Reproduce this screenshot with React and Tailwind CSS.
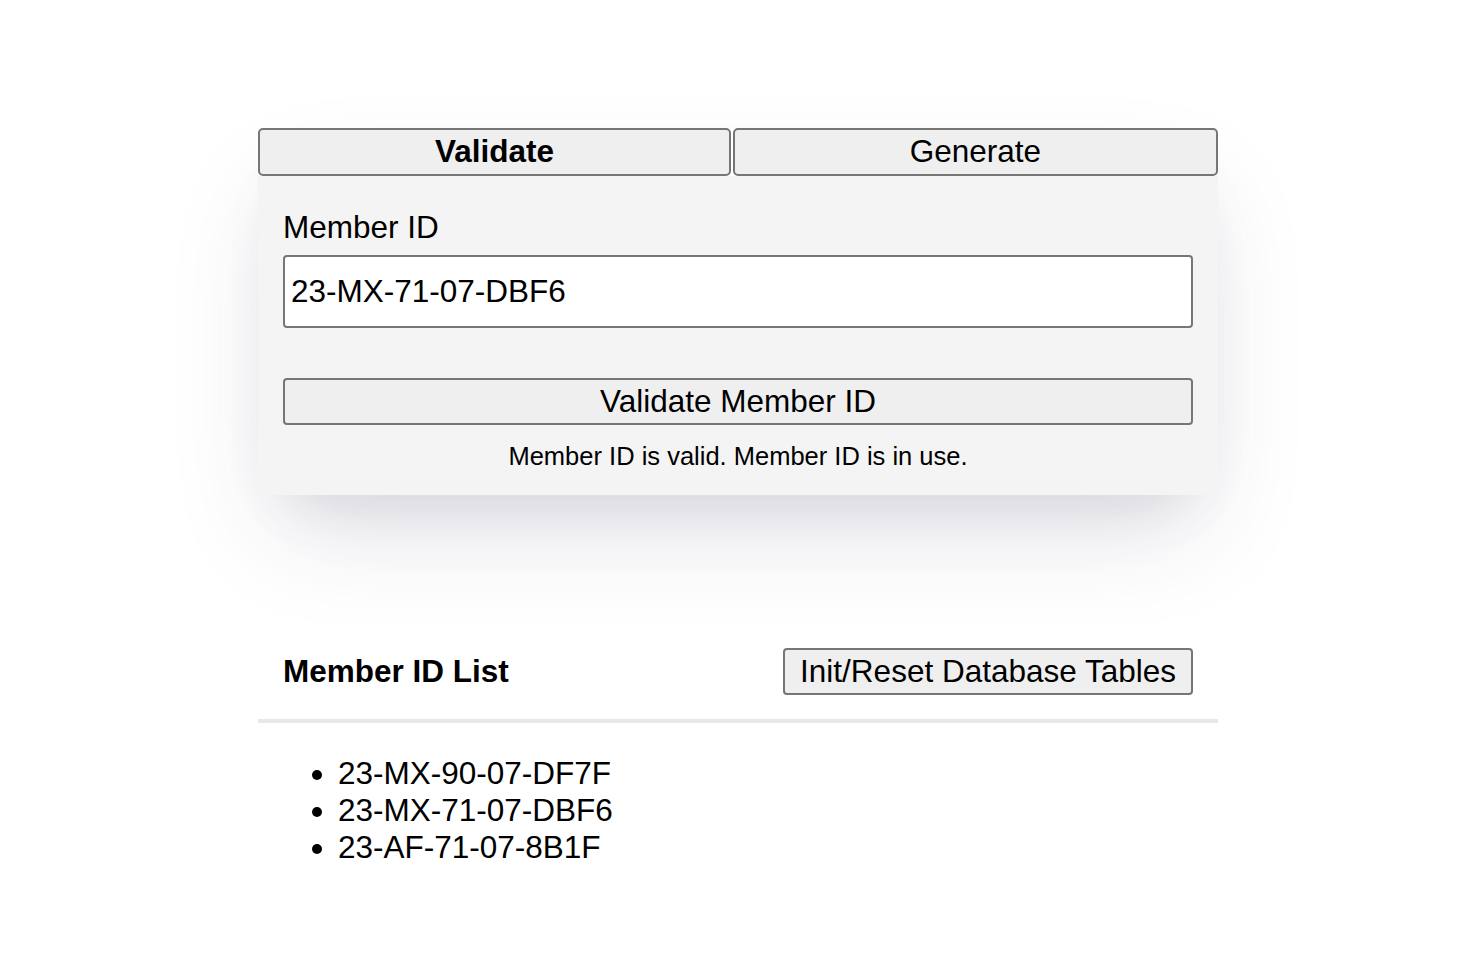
import React from "react";

const ids = ["23-MX-90-07-DF7F", "23-MX-71-07-DBF6", "23-AF-71-07-8B1F"];

export default function App() {
  return (
    <div className="min-h-screen bg-white text-black font-['Liberation_Sans',Arial,sans-serif]">
      <div className="mx-auto w-[960px] translate-x-[1px] pt-[128px]">
        {/* tabs + validate panel */}
        <div className="shadow-[0_50px_100px_-20px_rgba(50,50,93,0.15),0_30px_60px_-30px_rgba(0,0,0,0.1)]">
          <div className="flex gap-[2px] bg-white">
            <button className="flex-auto h-[48px] rounded-[5px] border-2 border-[#767676] bg-[#efefef] text-[31.5px] font-bold leading-none">
              Validate
            </button>
            <button className="flex-auto h-[48px] rounded-[5px] border-2 border-[#767676] bg-[#efefef] text-[31.5px] leading-none">
              Generate
            </button>
          </div>
          <div className="bg-[#f4f4f4] px-[25px] pt-[33px] pb-[24px]">
            <label className="block text-[31.5px] leading-[37px]">Member ID</label>
            <input
              className="mt-[9px] block w-full h-[73px] rounded-[4px] border-2 border-[#767676] bg-white px-[6px] text-[31.5px] outline-none"
              defaultValue="23-MX-71-07-DBF6"
            />
            <button className="mt-[50px] block w-full h-[47px] rounded-[4px] border-2 border-[#767676] bg-[#efefef] text-[31.5px] leading-none">
              Validate Member ID
            </button>
            <p className="mt-[16px] text-center text-[25.5px] leading-[30px]">
              Member ID is valid. Member ID is in use.
            </p>
          </div>
        </div>

        {/* member list */}
        <div className="mt-[153px]">
          <div className="flex items-center justify-between px-[25px] pb-[24px] border-b-4 border-[#e8e8e8]">
            <h2 className="text-[31.5px] font-bold leading-[37px]">Member ID List</h2>
            <button className="h-[47px] rounded-[4px] border-2 border-[#767676] bg-[#efefef] px-[15px] text-[31.5px] leading-none">
              Init/Reset Database Tables
            </button>
          </div>
          <ul className="mt-[32px] list-disc pl-[80px] text-[31.5px] leading-[37px]">
            {ids.map((id) => (
              <li key={id}>{id}</li>
            ))}
          </ul>
        </div>
      </div>
    </div>
  );
}
